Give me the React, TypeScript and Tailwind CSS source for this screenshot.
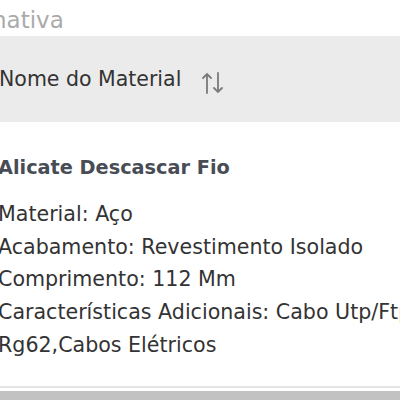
import { useMemo } from "react";

const specs = [
  "Material: Aço",
  "Acabamento: Revestimento Isolado",
  "Comprimento: 112 Mm",
  "Características Adicionais: Cabo Utp/Ftp, Rg59, Rg6,",
  "Rg62,Cabos Elétricos",
];

const SortIcon = () => (
  <svg width="26" height="26" viewBox="0 0 26 26" fill="none" stroke="#7a7a7a" strokeWidth="1.8" strokeLinecap="round">
    <path d="M7 23V4M3 8l4-4 4 4" />
    <path d="M18 3v19M14 18l4 4 4-4" />
  </svg>
);

export default function App() {
  const lines = useMemo(() => specs, []);

  return (
    <div className="h-[400px] w-[400px] overflow-hidden bg-white font-['DejaVu_Sans','Liberation_Sans',sans-serif]">
      <div className="-ml-[8px] h-[36px] pt-[2px] text-[23px] leading-[36px] text-[#aaaaaa]">nativa</div>
      <div className="-ml-[1px] flex h-[86px] items-center bg-[#ebebeb]">
        <span className="text-[20.5px] text-[#333]">Nome do Material</span>
        <span className="ml-[19px] mt-[8px]">
          <SortIcon />
        </span>
      </div>
      <div className="-ml-[2px] pt-[31px]">
        <div className="text-[19.3px] font-bold leading-[30px] text-[#484c55]">Alicate Descascar Fio</div>
        <div className="mt-[15px] whitespace-nowrap text-[20.6px] leading-[32.7px] text-[#333]">
          {lines.map((l) => (
            <div key={l}>{l}</div>
          ))}
        </div>
      </div>
      <div className="mt-[24px] h-[2px] bg-[#e4e4e4]" />
      <div className="mt-[3px] h-[10px] bg-[#c2c2c2]" />
    </div>
  );
}
